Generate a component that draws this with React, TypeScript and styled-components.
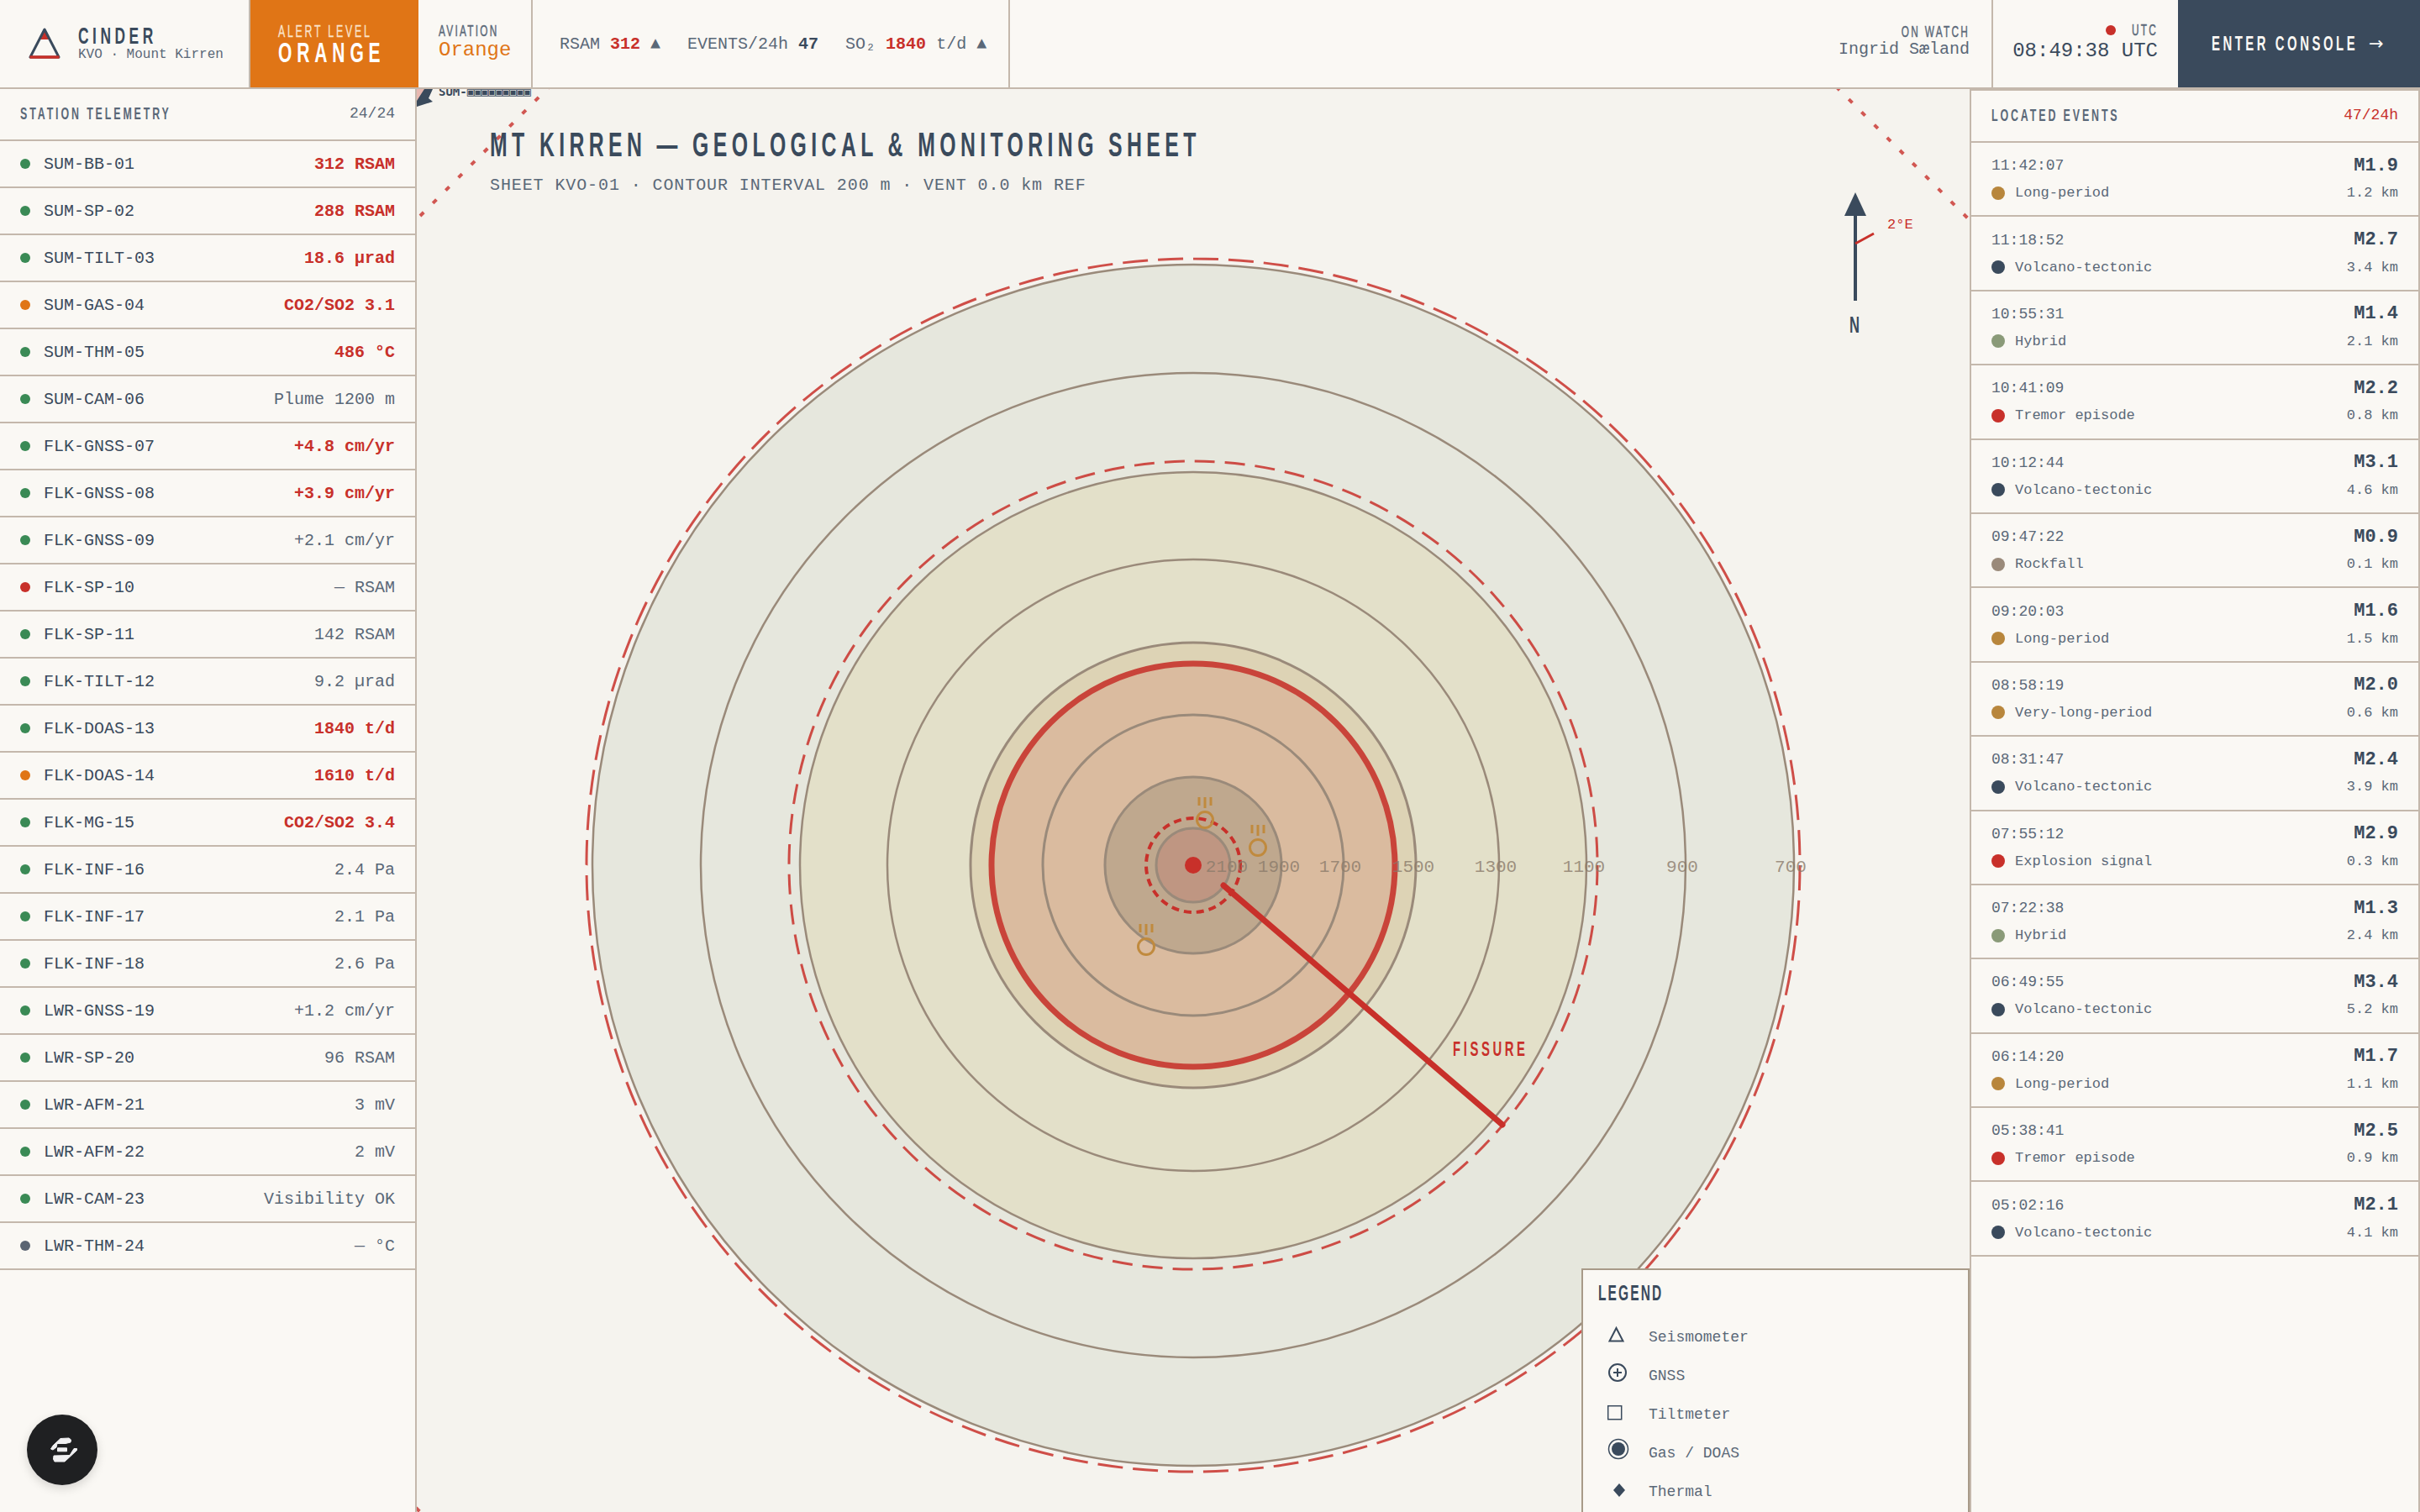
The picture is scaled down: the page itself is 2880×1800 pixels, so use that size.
import React from "react";
import styled, { createGlobalStyle, css } from "styled-components";

const INK = "#3a4a5c";
const MUTED = "#5a6878";
const RED = "#c8302a";
const ORANGE = "#e07516";
const LINE = "#c4b8ac";
const PAPER = "#faf8f4";
const CONTOUR = "#9a8a7a";
const DISPLAY = `"Liberation Sans", sans-serif`;
const MONO = `"Liberation Mono", monospace`;

const GlobalStyle = createGlobalStyle`
  html, body { margin: 0; padding: 0; background: ${PAPER}; }
  * { box-sizing: border-box; }
`;

// no condensed face is installed, so the heading type is squeezed by hand
const narrow = (origin = "left") => css`
  font-family: ${DISPLAY};
  white-space: nowrap;
  transform: scaleX(0.62);
  transform-origin: ${origin} center;
`;

const Page = styled.div`
  position: relative;
  width: 2880px;
  height: 1800px;
  overflow: hidden;
  display: flex;
  flex-direction: column;
  font-family: ${MONO};
  color: ${INK};
  background: ${PAPER};
`;

const TopBar = styled.header`
  flex: 0 0 106px;
  display: flex;
  align-items: stretch;
  border-bottom: 2px solid ${LINE};
`;

const Brand = styled.div`
  width: 298px;
  display: flex;
  align-items: center;
  gap: 19px;
  padding-left: 34px;
  border-right: 2px solid ${LINE};
`;

const BrandText = styled.div`
  display: flex;
  flex-direction: column;
`;

const BrandName = styled.div`
  ${narrow()}
  font-weight: 700;
  font-size: 28px;
  line-height: 26px;
  letter-spacing: 7.3px;
`;

const BrandSub = styled.div`
  font-size: 16px;
  line-height: 18px;
  color: ${MUTED};
`;

const AlertBlock = styled.div`
  width: 200px;
  background: ${ORANGE};
  padding: 26px 0 0 33px;
  color: #fff;
`;

const AlertLabel = styled.div`
  ${narrow()}
  font-size: 20px;
  line-height: 22px;
  letter-spacing: 4.4px;
  color: #fbe3cb;
  -webkit-text-stroke: 0.3px #fbe3cb;
`;

const AlertValue = styled.div`
  ${narrow()}
  font-weight: 700;
  font-size: 34px;
  line-height: 29px;
  letter-spacing: 9.4px;
`;

const Aviation = styled.div`
  width: 136px;
  padding: 27px 0 0 24px;
  border-right: 2px solid ${LINE};
`;

const SmallCaps = styled.div<{ $end?: boolean }>`
  ${(p) => narrow(p.$end ? "right" : "left")}
  font-size: 19px;
  line-height: 20px;
  letter-spacing: 3.7px;
  color: ${MUTED};
  -webkit-text-stroke: 0.5px ${MUTED};
`;

const AviationValue = styled.div`
  font-size: 24px;
  line-height: 26px;
  color: ${ORANGE};
`;

const Metrics = styled.div`
  width: 568px;
  display: flex;
  align-items: center;
  gap: 32px;
  padding: 0 0 0 32px;
  border-right: 2px solid ${LINE};
  font-size: 20px;
  color: ${MUTED};
`;

const Metric = styled.span`
  white-space: pre;
`;

const MetricValue = styled.b<{ $alarm?: boolean }>`
  color: ${(p) => (p.$alarm ? RED : INK)};
`;

const Spacer = styled.div`
  flex: 1;
`;

const Watch = styled.div`
  padding: 28px 26px 0 0;
  border-right: 2px solid ${LINE};
  text-align: right;
`;

const WatchName = styled.div`
  font-size: 20px;
  line-height: 22px;
  color: ${MUTED};
`;

const Clock = styled.div`
  width: 220px;
  padding: 26px 24px 0 0;
  text-align: right;
`;

const ClockLabel = styled.div`
  display: flex;
  justify-content: flex-end;
  align-items: center;
`;

const ClockDot = styled.span`
  width: 12px;
  height: 12px;
  border-radius: 50%;
  background: ${RED};
`;

const ClockValue = styled.div`
  font-size: 24px;
  line-height: 30px;
  color: ${INK};
`;

const ConsoleButton = styled.button`
  width: 288px;
  border: 0;
  padding: 0 0 0 40px;
  background: ${INK};
  color: ${PAPER};
  display: flex;
  align-items: center;
`;

const ConsoleLabel = styled.span`
  ${narrow()}
  width: 187px;
  font-weight: 700;
  font-size: 24px;
  letter-spacing: 5.7px;
`;

const ConsoleArrow = styled.span`
  font-family: "DejaVu Sans", sans-serif;
  font-size: 21px;
  line-height: 1;
`;

const Body = styled.main`
  flex: 1;
  min-height: 0;
  display: grid;
  grid-template-columns: 496px 1fr 536px;
`;

const LeftPanel = styled.aside`
  border-right: 2px solid ${LINE};
  background: ${PAPER};
`;

const RightPanel = styled.aside`
  border: 2px solid ${LINE};
  border-bottom: 0;
  background: ${PAPER};
`;

const PanelHead = styled.div`
  height: 62px;
  display: flex;
  align-items: center;
  justify-content: space-between;
  padding: 0 24px 2px;
  border-bottom: 2px solid ${LINE};
`;

const PanelTitle = styled.div`
  ${narrow()}
  font-weight: 700;
  font-size: 20px;
  letter-spacing: 4.66px;
  color: ${MUTED};
`;

const PanelCount = styled.div<{ $alarm?: boolean }>`
  font-size: 18px;
  color: ${(p) => (p.$alarm ? RED : MUTED)};
`;

const StationRow = styled.div`
  height: 56px;
  display: flex;
  align-items: center;
  padding: 0 24px;
  border-bottom: 2px solid ${LINE};
  font-size: 20px;
`;

const Dot = styled.span<{ $color: string; $size: number }>`
  flex: none;
  width: ${(p) => p.$size}px;
  height: ${(p) => p.$size}px;
  border-radius: 50%;
  background: ${(p) => p.$color};
`;

const StationName = styled.span`
  margin-left: 16px;
  flex: 1;
`;

const StationValue = styled.span<{ $alarm?: boolean }>`
  color: ${(p) => (p.$alarm ? RED : MUTED)};
  font-weight: ${(p) => (p.$alarm ? 700 : 400)};
`;

const EventRow = styled.div`
  height: 88.4px;
  display: grid;
  grid-template-columns: 1fr auto;
  grid-template-rows: 33px 32px;
  align-content: center;
  align-items: center;
  padding: 0 24px;
  border-bottom: 2px solid ${LINE};
`;

const EventTime = styled.span`
  font-size: 18px;
  color: ${MUTED};
`;

const EventMag = styled.b`
  justify-self: end;
  font-size: 22px;
  color: ${INK};
`;

const EventType = styled.span`
  display: flex;
  align-items: center;
  gap: 12px;
  font-size: 17px;
  color: ${MUTED};
`;

const EventDist = styled.span`
  font-size: 17px;
  color: ${MUTED};
`;

const MapPane = styled.section`
  position: relative;
  overflow: hidden;
  background: #f5f3ee;
`;

const MapCanvas = styled.svg`
  position: absolute;
  left: 0;
  top: 0;
  width: 1848px;
  height: 1848px;
`;

const MapHead = styled.div`
  position: relative;
  padding: 43px 0 0 87px;
`;

const MapTitle = styled.h1`
  ${narrow()}
  margin: 0;
  font-weight: 700;
  font-size: 40px;
  line-height: 46px;
  letter-spacing: 8.7px;
`;

const MapSub = styled.div`
  margin-top: 13px;
  font-size: 20px;
  line-height: 26px;
  letter-spacing: 0.9px;
  color: ${MUTED};
`;

const Legend = styled.div`
  position: absolute;
  right: 0;
  top: 1404px;
  width: 462px;
  height: 320px;
  background: ${PAPER};
  border: 2px solid #a89a88;
  padding: 12px 0 0 18px;
`;

const LegendTitle = styled.div`
  ${narrow()}
  font-weight: 700;
  font-size: 25px;
  line-height: 30px;
  letter-spacing: 3.4px;
  margin-bottom: 15px;
`;

const LegendRow = styled.div`
  height: 46px;
  display: flex;
  align-items: center;
  font-size: 18px;
  color: ${MUTED};
`;

const Fab = styled.button`
  position: absolute;
  left: 32px;
  top: 1684px;
  width: 84px;
  height: 84px;
  padding: 0;
  border: 0;
  border-radius: 50%;
  background: #1f2022;
  box-shadow: 0 4px 12px rgba(0, 0, 0, 0.15);
  display: flex;
  align-items: center;
  justify-content: center;
`;

const stations: [string, string, string, boolean][] = [
  ["SUM-BB-01", "312 RSAM", "ok", true],
  ["SUM-SP-02", "288 RSAM", "ok", true],
  ["SUM-TILT-03", "18.6 µrad", "ok", true],
  ["SUM-GAS-04", "CO2/SO2 3.1", "warn", true],
  ["SUM-THM-05", "486 °C", "ok", true],
  ["SUM-CAM-06", "Plume 1200 m", "ok", false],
  ["FLK-GNSS-07", "+4.8 cm/yr", "ok", true],
  ["FLK-GNSS-08", "+3.9 cm/yr", "ok", true],
  ["FLK-GNSS-09", "+2.1 cm/yr", "ok", false],
  ["FLK-SP-10", "— RSAM", "bad", false],
  ["FLK-SP-11", "142 RSAM", "ok", false],
  ["FLK-TILT-12", "9.2 µrad", "ok", false],
  ["FLK-DOAS-13", "1840 t/d", "ok", true],
  ["FLK-DOAS-14", "1610 t/d", "warn", true],
  ["FLK-MG-15", "CO2/SO2 3.4", "ok", true],
  ["FLK-INF-16", "2.4 Pa", "ok", false],
  ["FLK-INF-17", "2.1 Pa", "ok", false],
  ["FLK-INF-18", "2.6 Pa", "ok", false],
  ["LWR-GNSS-19", "+1.2 cm/yr", "ok", false],
  ["LWR-SP-20", "96 RSAM", "ok", false],
  ["LWR-AFM-21", "3 mV", "ok", false],
  ["LWR-AFM-22", "2 mV", "ok", false],
  ["LWR-CAM-23", "Visibility OK", "ok", false],
  ["LWR-THM-24", "— °C", "off", false],
];

const statusColor: Record<string, string> = {
  ok: "#3a8a55",
  warn: ORANGE,
  bad: RED,
  off: "#5a6472",
};

const eventColor: Record<string, string> = {
  "Long-period": "#b8863c",
  "Very-long-period": "#b8863c",
  "Volcano-tectonic": INK,
  Hybrid: "#8a9a78",
  "Tremor episode": RED,
  "Explosion signal": RED,
  Rockfall: "#9a8a7a",
};

const events: [string, string, string, string][] = [
  ["11:42:07", "M1.9", "Long-period", "1.2 km"],
  ["11:18:52", "M2.7", "Volcano-tectonic", "3.4 km"],
  ["10:55:31", "M1.4", "Hybrid", "2.1 km"],
  ["10:41:09", "M2.2", "Tremor episode", "0.8 km"],
  ["10:12:44", "M3.1", "Volcano-tectonic", "4.6 km"],
  ["09:47:22", "M0.9", "Rockfall", "0.1 km"],
  ["09:20:03", "M1.6", "Long-period", "1.5 km"],
  ["08:58:19", "M2.0", "Very-long-period", "0.6 km"],
  ["08:31:47", "M2.4", "Volcano-tectonic", "3.9 km"],
  ["07:55:12", "M2.9", "Explosion signal", "0.3 km"],
  ["07:22:38", "M1.3", "Hybrid", "2.4 km"],
  ["06:49:55", "M3.4", "Volcano-tectonic", "5.2 km"],
  ["06:14:20", "M1.7", "Long-period", "1.1 km"],
  ["05:38:41", "M2.5", "Tremor episode", "0.9 km"],
  ["05:02:16", "M2.1", "Volcano-tectonic", "4.1 km"],
];

const legend: [React.ReactNode, string][] = [
  [<path d="M21.5 12 L29.5 27.5 H13.5 Z" fill="none" stroke={INK} strokeWidth={2} />, "Seismometer"],
  [
    <g fill="none" stroke={INK} strokeWidth={2}>
      <circle cx={23} cy={19} r={10} />
      <path d="M18 19 H28 M23 14 V24" />
    </g>,
    "GNSS",
  ],
  [<rect x={11.7} y={12.7} width={16} height={16} fill="none" stroke={INK} strokeWidth={1.5} />, "Tiltmeter"],
  [
    <g>
      <circle cx={24} cy={18} r={11.5} fill="none" stroke={INK} strokeWidth={1.5} />
      <circle cx={24} cy={18} r={8} fill={INK} />
    </g>,
    "Gas / DOAS",
  ],
  [<path d="M25 13 L32 21 L25 29 L18 21 Z" fill={INK} />, "Thermal"],
];

// page coordinates: the vent sits at 1420,1030
const CX = 1420;
const CY = 1030;

const contourLabels: [string, number][] = [
  ["2100", 40],
  ["1900", 102],
  ["1700", 175],
  ["1500", 262],
  ["1300", 360],
  ["1100", 465],
  ["900", 582],
  ["700", 711],
];

const vents: [number, number][] = [
  [1434, 976],
  [1497, 1009],
  [1364, 1127],
];

const boundary: [number, number, number, number][] = [
  [500, 257, 700, 57],
  [2185, 103, 2350, 268],
  [495, 1795, 520, 1820],
];

const Contour = ({ r, fill, w = 2.5 }: { r: number; fill: string; w?: number }) => (
  <circle cx={CX} cy={CY} r={r} fill={fill} stroke={CONTOUR} strokeWidth={w} />
);

const VolcanoMap = () => (
  <MapCanvas viewBox="496 106 1848 1848">
    {boundary.map(([x1, y1, x2, y2]) => (
      <line
        key={x1}
        x1={x1}
        y1={y1}
        x2={x2}
        y2={y2}
        stroke={RED}
        strokeOpacity={0.8}
        strokeWidth={4}
        strokeDasharray="6 15.5"
      />
    ))}
    <circle cx={497} cy={106} r={15} fill="#e8b8b0" />
    <polygon points="505,106 515,106 510,117 515,121 496,127 496,120" fill={INK} />
    <text x={522} y={114} fontFamily={`"DejaVu Sans Mono", monospace`} fontWeight={700} fontSize={14} fill={INK}>
      SUM-▣▣▣▣▣▣▣▣▣
    </text>

    <Contour r={715} fill="#e6e7dd" />
    <circle cx={CX} cy={CY} r={722} fill="none" stroke={RED} strokeOpacity={0.85} strokeWidth={3} strokeDasharray="30 12" />
    <Contour r={586} fill="#e6e7dd" />
    <circle cx={CX} cy={CY} r={481} fill="none" stroke={RED} strokeOpacity={0.85} strokeWidth={3} strokeDasharray="24 12" />
    <Contour r={468} fill="#e3e0c9" />
    <Contour r={364} fill="#e3e0c9" />
    <Contour r={265} fill="#ddd3b5" w={3} />
    <circle cx={CX} cy={CY} r={240} fill="#dabb9f" stroke="#c9443a" strokeWidth={7} />
    <Contour r={179} fill="none" w={3} />
    <Contour r={105} fill="#bfa88e" w={3} />
    <Contour r={44} fill="#bf9682" w={3} />
    <circle cx={CX} cy={CY} r={56} fill="none" stroke={RED} strokeWidth={4} strokeDasharray="9 6" />

    <line x1={1456} y1={1054} x2={1788} y2={1339} stroke={RED} strokeWidth={7} strokeLinecap="round" />
    <text
      x={1729}
      y={1257}
      transform="translate(1729 0) scale(0.62 1) translate(-1729 0)"
      fontFamily={DISPLAY}
      fontWeight={700}
      fontSize={24}
      letterSpacing={5.8}
      fill={RED}
    >
      FISSURE
    </text>

    {vents.map(([x, y]) => (
      <g key={x} fill="none" stroke="#c08a3e" strokeWidth={3}>
        <circle cx={x} cy={y} r={9.5} />
        <path d={`M${x - 7} ${y - 27}v10M${x} ${y - 27}v13M${x + 7} ${y - 27}v10`} />
      </g>
    ))}
    <circle cx={CX} cy={CY} r={10} fill={RED} />

    {contourLabels.map(([label, dx]) => (
      <text
        key={label}
        x={CX + dx}
        y={CY + 8}
        textAnchor="middle"
        fontFamily={MONO}
        fontSize={21}
        fill="#8a7a6a"
        fillOpacity={0.8}
      >
        {label}
      </text>
    ))}

    <path d="M2208 229 L2221 257 L2195 257 Z" fill={INK} />
    <line x1={2208} y1={257} x2={2208} y2={358} stroke={INK} strokeWidth={4} />
    <line x1={2208} y1={290} x2={2230} y2={278} stroke={RED} strokeWidth={3} />
    <text x={2246} y={272} fontFamily={MONO} fontSize={17} fill={RED}>
      2°E
    </text>
    <text
      x={2201}
      y={396}
      fontFamily={DISPLAY}
      fontWeight={700}
      fontSize={28}
      textLength={12}
      lengthAdjust="spacingAndGlyphs"
      fill={INK}
    >
      N
    </text>
  </MapCanvas>
);

const Logo = () => (
  <svg width="40" height="38" viewBox="0 0 40 38">
    <path d="M19 1 L12.6 14 H25.4 Z" fill={RED} />
    <path d="M19 2 L2 35 H36 Z" fill="none" stroke={INK} strokeWidth={3} strokeLinejoin="round" />
    <path d="M1.5 35 H36.5" stroke={RED} strokeWidth={3.5} />
  </svg>
);

const FabMark = () => (
  <svg width="36" height="30" viewBox="0 0 36 30" fill="#f0f0f2" stroke="#f0f0f2" strokeWidth={1} strokeLinejoin="round">
    <path d="M4.5 14 L7 10 L16 1.5 L26 1 L28.5 3 L28 6 L22 7.5 L12 7.5 L11 12 L7 15 Z" />
    <path d="M12.5 12.8 H23.5 V16.8 H12.5 Z" />
    <path d="M8 22 L27 21.5 L32 13.5 L35.5 13.5 L35.5 15.5 L21 29 L9 29 L7.5 26 Z" />
  </svg>
);

export default function App() {
  return (
    <Page>
      <GlobalStyle />
      <TopBar>
        <Brand>
          <Logo />
          <BrandText>
            <BrandName>CINDER</BrandName>
            <BrandSub>KVO · Mount Kirren</BrandSub>
          </BrandText>
        </Brand>
        <AlertBlock>
          <AlertLabel>ALERT LEVEL</AlertLabel>
          <AlertValue>ORANGE</AlertValue>
        </AlertBlock>
        <Aviation>
          <SmallCaps>AVIATION</SmallCaps>
          <AviationValue>Orange</AviationValue>
        </Aviation>
        <Metrics>
          <Metric>
            RSAM <MetricValue $alarm>312</MetricValue> ▲
          </Metric>
          <Metric>
            EVENTS/24h <MetricValue>47</MetricValue>
          </Metric>
          <Metric>
            SO₂ <MetricValue $alarm>1840</MetricValue> t/d ▲
          </Metric>
        </Metrics>
        <Spacer />
        <Watch>
          <SmallCaps $end>ON WATCH</SmallCaps>
          <WatchName>Ingrid Sæland</WatchName>
        </Watch>
        <Clock>
          <ClockLabel>
            <ClockDot />
            <SmallCaps $end>UTC</SmallCaps>
          </ClockLabel>
          <ClockValue>08:49:38 UTC</ClockValue>
        </Clock>
        <ConsoleButton>
          <ConsoleLabel>ENTER CONSOLE</ConsoleLabel>
          <ConsoleArrow>→</ConsoleArrow>
        </ConsoleButton>
      </TopBar>
      <Body>
        <LeftPanel>
          <PanelHead>
            <PanelTitle>STATION TELEMETRY</PanelTitle>
            <PanelCount>24/24</PanelCount>
          </PanelHead>
          {stations.map(([name, value, status, alarm]) => (
            <StationRow key={name}>
              <Dot $color={statusColor[status]} $size={12} />
              <StationName>{name}</StationName>
              <StationValue $alarm={alarm}>{value}</StationValue>
            </StationRow>
          ))}
        </LeftPanel>
        <MapPane>
          <VolcanoMap />
          <MapHead>
            <MapTitle>MT KIRREN — GEOLOGICAL &amp; MONITORING SHEET</MapTitle>
            <MapSub>SHEET KVO-01 · CONTOUR INTERVAL 200 m · VENT 0.0 km REF</MapSub>
          </MapHead>
          <Legend>
            <LegendTitle>LEGEND</LegendTitle>
            {legend.map(([icon, label]) => (
              <LegendRow key={label}>
                <svg width="60" height="46" viewBox="0 0 60 46">
                  {icon}
                </svg>
                <span>{label}</span>
              </LegendRow>
            ))}
          </Legend>
        </MapPane>
        <RightPanel>
          <PanelHead>
            <PanelTitle>LOCATED EVENTS</PanelTitle>
            <PanelCount $alarm>47/24h</PanelCount>
          </PanelHead>
          {events.map(([time, mag, type, dist]) => (
            <EventRow key={time}>
              <EventTime>{time}</EventTime>
              <EventMag>{mag}</EventMag>
              <EventType>
                <Dot $color={eventColor[type]} $size={16} />
                {type}
              </EventType>
              <EventDist>{dist}</EventDist>
            </EventRow>
          ))}
        </RightPanel>
      </Body>
      <Fab aria-label="assistant">
        <FabMark />
      </Fab>
    </Page>
  );
}
